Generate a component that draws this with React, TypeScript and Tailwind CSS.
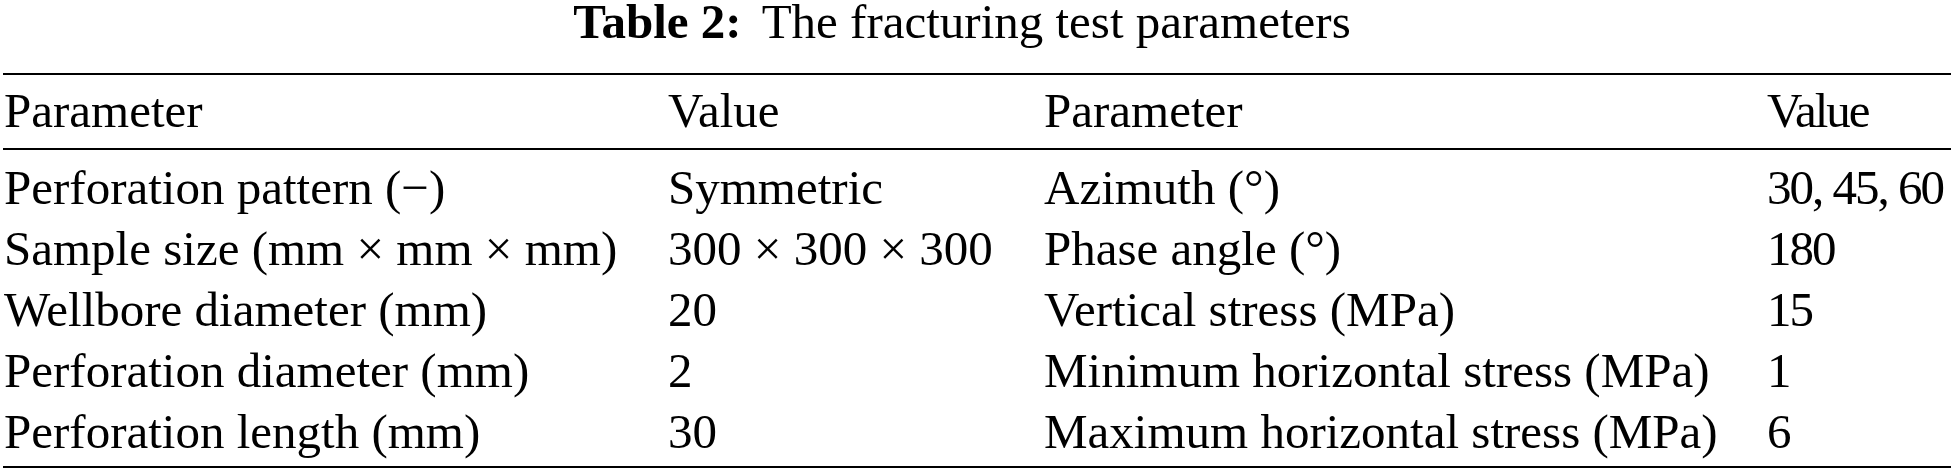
import React from 'react';

const header = ['Parameter', 'Value', 'Parameter', 'Value'];

const rows: string[][] = [
  ['Perforation pattern (\u2212)', 'Symmetric', 'Azimuth (\u00b0)', '30, 45, 60'],
  ['Sample size (mm \u00d7 mm \u00d7 mm)', '300 \u00d7 300 \u00d7 300', 'Phase angle (\u00b0)', '180'],
  ['Wellbore diameter (mm)', '20', 'Vertical stress (MPa)', '15'],
  ['Perforation diameter (mm)', '2', 'Minimum horizontal stress (MPa)', '1'],
  ['Perforation length (mm)', '30', 'Maximum horizontal stress (MPa)', '6'],
];

const Row: React.FC<{ cells: string[] }> = ({ cells }) => (
  <div className="grid grid-cols-[664px_376px_723px_1fr] pl-[4px] leading-[61px] whitespace-nowrap">
    {cells.map((c, i) => (
      <div key={i} className={i === 3 ? 'tracking-[-2px]' : ''}>
        {c}
      </div>
    ))}
  </div>
);

export default function App() {
  return (
    <div className="w-[1954px] h-[475px] bg-white text-black font-['Liberation_Serif','Times_New_Roman',serif] text-[49px]">
      <div className="h-[73px] pr-[30px] leading-[44px] text-center whitespace-nowrap">
        <span className="font-bold">Table 2:</span>
        <span className="ml-[20px]">The fracturing test parameters</span>
      </div>
      <div className="mx-[3px] h-[2px] bg-black" />
      <div className="pt-[5px] pb-[7px]">
        <Row cells={header} />
      </div>
      <div className="mx-[3px] h-[2px] bg-black" />
      <div className="pt-[7px] pb-[4px]">
        {rows.map((r, i) => (
          <Row key={i} cells={r} />
        ))}
      </div>
      <div className="mx-[3px] h-[2px] bg-black" />
    </div>
  );
}
